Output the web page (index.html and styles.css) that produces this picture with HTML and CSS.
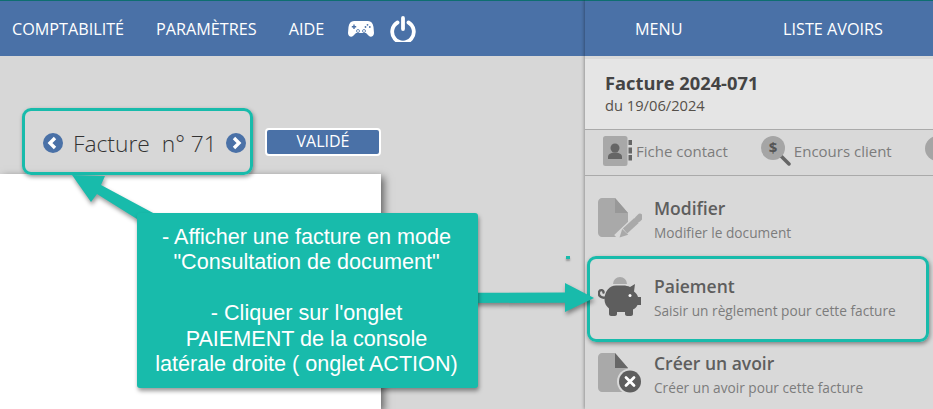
FILE: index.html
```html
<!DOCTYPE html>
<html lang="fr">
<head>
  <meta charset="UTF-8">
  <title>Facture 2024-071</title>
  <link rel="stylesheet" href="styles.css">
</head>
<body>
  <div class="main">
    <nav class="topbar">
      <a class="topbar-link">COMPTABILITÉ</a>
      <a class="topbar-link">PARAMÈTRES</a>
      <a class="topbar-link">AIDE</a>
      <svg class="icon-gamepad" viewBox="0 0 26 16">
        <path fill="#fff" d="M6 0h14c3 0 5 2 5.500 6l.5 6c0 3-3 5-5 3l-3-3H8l-3 3c-2 2-5 0-5-3l.5-6C1 2 3 0 6 0z"/>
        <g fill="none" stroke="#4a71a7" stroke-width=".8">
          <circle cx="10" cy="10" r="1.500"/>
          <circle cx="16" cy="10" r="1.500"/>
        </g>
        <path fill="#4a71a7" d="M5.300 3.500h1.400v1.500h1.500v1.400H6.700v1.500H5.300V6.400H3.800V5h1.500z"/>
        <g fill="#4a71a7">
          <circle cx="19.500" cy="3.800" r=".9"/>
          <circle cx="21.800" cy="6" r=".9"/>
          <circle cx="17.500" cy="6" r=".9"/>
        </g>
      </svg>
      <svg class="icon-power" viewBox="0 0 26 26">
        <path fill="none" stroke="#fff" stroke-width="3.800" stroke-linecap="round" d="M7.500 6.500a10.800 10.800 0 1 0 11 0"/>
        <path fill="none" stroke="#fff" stroke-width="3.800" stroke-linecap="round" d="M13 2v11"/>
      </svg>
    </nav>

    <div class="doc-head">
      <div class="doc-nav">
        <span class="round-btn">
          <svg viewBox="0 0 20 20"><path d="M12 5l-5 5 5 5" /></svg>
        </span>
        <span class="doc-title">Facture&nbsp; n° 71</span>
        <span class="round-btn">
          <svg viewBox="0 0 20 20"><path d="M8 5l5 5-5 5" /></svg>
        </span>
      </div>
      <span class="status">VALIDÉ</span>
    </div>

    <div class="sheet"></div>
  </div>

  <aside class="panel">
    <div class="panel-tabs">
      <a class="panel-tab">MENU</a>
      <a class="panel-tab">LISTE AVOIRS</a>
    </div>

    <div class="panel-info">
      <div class="info-title">Facture 2024-071</div>
      <div class="info-date">du 19/06/2024</div>
    </div>

    <div class="toolbar">
      <div class="tool">
        <svg class="icon-contact" viewBox="0 0 29 30">
          <rect width="24.500" height="30" rx="2.500" fill="#a8a8a8"/>
          <circle cx="12" cy="12" r="4.500" fill="#666"/>
          <path fill="#666" d="M5 23v-2c0-3 3-4.500 7-4.500s7 1.500 7 4.500v2z"/>
          <path fill="#666" d="M25.500 4H29v5h-3.500zM25.500 11.500H29v6h-3.500zM25.500 19H29v5.500h-3.500z"/>
        </svg>
        <span>Fiche contact</span>
      </div>
      <div class="tool">
        <svg class="icon-search" viewBox="0 0 30 30">
          <path stroke="#666" stroke-width="3.500" stroke-linecap="round" d="M20 20l8 8"/>
          <circle cx="12" cy="12" r="12" fill="#a5a5a5"/>
          <text x="12" y="17" class="dollar" text-anchor="middle">$</text>
        </svg>
        <span>Encours client</span>
      </div>
      <span class="tool-round"></span>
    </div>

    <ul class="actions">
      <li class="action">
        <svg class="action-icon" viewBox="0 0 44 40">
          <path fill="#a9a9a9" d="M4 0h13l13 15v20c0 2-2 4-4 4H4c-2 0-4-2-4-4V4c0-2 2-4 4-4z"/>
          <path fill="#989898" d="M17 0l13 15H17z"/>
          <path stroke="#d9d9d9" stroke-width="11" d="M20 41l22-21"/>
          <path stroke="#a9a9a9" stroke-width="6.500" d="M27 33l11.500-10.500"/>
          <path stroke="#a9a9a9" stroke-width="6.500" stroke-linecap="round" d="M40 21l2-2"/>
          <path fill="#a9a9a9" d="M21.500 39.500l2.700-8.500 6 5.800z"/>
        </svg>
        <div>
          <div class="action-name">Modifier</div>
          <div class="action-desc">Modifier le document</div>
        </div>
      </li>
      <li class="action">
        <svg class="action-icon" viewBox="0 0 44 40">
          <path fill="#a9a9a9" d="M15 8a7 7 0 0 1 14 0z"/>
          <path fill="none" stroke="#5e5e5e" stroke-width="2.400" stroke-linecap="round" d="M9 21C4 23 0 20 1 16c1-3 5-2 4.500 .5"/>
          <path fill="#5e5e5e" d="M18 9.500h7c3 0 5 .5 7 1.500l5-3-1 7.500c2 1.500 3.500 3.500 4 5.500h3v8h-3.500c-1 2-2.500 3.500-4.500 4.500V38c0 1-1 2-2 2h-4c-1 0-2-1-2-2v-2H19v2c0 1-1 2-2 2h-4c-1 0-2-1-2-2v-5.500C8 30 6.500 27 6.500 23.500c0-8 5-14 11.500-14z"/>
          <circle cx="32" cy="19.500" r="1.500" fill="#fff"/>
        </svg>
        <div>
          <div class="action-name">Paiement</div>
          <div class="action-desc">Saisir un règlement pour cette facture</div>
        </div>
      </li>
      <li class="action">
        <svg class="action-icon" viewBox="0 0 44 40">
          <path fill="#a9a9a9" d="M4 0h13l13 15v20c0 2-2 4-4 4H4c-2 0-4-2-4-4V4c0-2 2-4 4-4z"/>
          <path fill="#666" d="M17 0l13 15H17z"/>
          <circle cx="32" cy="28.500" r="13" fill="#d9d9d9"/>
          <circle cx="32" cy="28.500" r="11" fill="#5e5e5e"/>
          <path stroke="#fff" stroke-width="2.800" stroke-linecap="round" d="M28 24.500l8 8M36 24.500l-8 8"/>
        </svg>
        <div>
          <div class="action-name">Créer un avoir</div>
          <div class="action-desc">Créer un avoir pour cette facture</div>
        </div>
      </li>
    </ul>
  </aside>

  <!-- annotations over the screen -->
  <div class="mark mark-nav"></div>
  <div class="mark mark-pay"></div>
  <span class="speck"></span>

  <svg class="arrows" viewBox="0 0 933 409">
    <path d="M72 175L105 176 101 185 155 214 137 219 97 194 91 202z"/>
    <path d="M470 292.800L565 292.500V283L594 298 565 312V302.700L470 303z"/>
  </svg>

  <div class="callout">
    - Afficher une facture en mode<br>
    "Consultation de document"<br>
    <br>
    - Cliquer sur l'onglet<br>
    PAIEMENT de la console<br>
    latérale droite ( onglet ACTION)
  </div>
</body>
</html>
```

FILE: styles.css
```css
* {
  box-sizing: border-box;
}

body {
  margin: 0;
  width: 933px;
  height: 409px;
  display: flex;
  overflow: hidden;
  position: relative;
  background-color: #d7d7d7;
  font-family: 'Open Sans', sans-serif;
  color: #444;
}

/* left side */
.main {
  width: 585px;
  display: flex;
  flex-direction: column;
}

.topbar {
  height: 56px;
  display: flex;
  align-items: center;
  padding: 0 0 0 12px;
  background-color: #4a71a7;
  border-top: 1px solid #0e6e70;
}

.topbar-link {
  font-size: 16.200px;
  color: #fff;
  margin-right: 32px;
}

.topbar-link:nth-child(3) {
  margin-right: 24px;
}

.icon-gamepad {
  width: 26px;
  height: 16px;
  margin-right: 16px;
}

.icon-power {
  width: 26px;
  height: 26px;
}

.doc-head {
  height: 118px;
  display: flex;
  align-items: center;
  padding: 56px 0 0 43px;
}

.doc-nav {
  width: 203px;
  display: flex;
  align-items: center;
  gap: 10px;
}

.round-btn {
  width: 20px;
  height: 20px;
  flex: none;
  border-radius: 50%;
  background-color: #4a71a7;
}

.round-btn svg {
  display: block;
  fill: none;
  stroke: #fff;
  stroke-width: 3.4;
}

.doc-title {
  width: 143px;
  font-size: 22.800px;
  font-weight: 300;
  color: #333;
  white-space: nowrap;
}

.status {
  width: 116px;
  height: 28px;
  margin: -3px 0 0 19px;
  border: 2px solid #fff;
  border-radius: 4px;
  background-color: #4a71a7;
  color: #fff;
  font-size: 16px;
  line-height: 23px;
  text-align: center;
}

.sheet {
  width: 381px;
  flex: 1;
  background-color: #fff;
  box-shadow: 3px 3px 8px rgba(0, 0, 0, 0.55);
}

/* right console */
.panel {
  width: 348px;
  display: flex;
  flex-direction: column;
  position: relative;
  background-color: #d9d9d9;
  box-shadow: -1px 0 3px rgba(0, 0, 0, 0.3);
  overflow: hidden;
}

.panel-tabs {
  height: 56px;
  flex: none;
  display: flex;
  align-items: center;
  gap: 100.500px;
  padding-left: 50px;
  background-color: #4a71a7;
  border-top: 1px solid #0e6e70;
}

.panel-tab {
  font-size: 16.200px;
  color: #fff;
}

.panel-info {
  height: 71px;
  flex: none;
  padding: 12px 0 0 20px;
  margin-top: 3px;
  background-color: #e5e5e5;
  border-bottom: 1px solid #aaa;
}

.info-title {
  font-size: 18.300px;
  font-weight: 700;
  line-height: 23px;
  color: #444;
}

.info-date {
  font-size: 14.700px;
  line-height: 22px;
  color: #55504a;
}

.toolbar {
  height: 46px;
  flex: none;
  display: flex;
  align-items: flex-start;
  gap: 33px;
  padding: 6px 0 0 18px;
  border-bottom: 1px solid #aaa;
}

.tool {
  display: flex;
  align-items: center;
  gap: 7px;
  flex: none;
  font-size: 15px;
  line-height: 30px;
  color: #7c7c7c;
  white-space: nowrap;
}

.tool:nth-child(2) {
  gap: 3px;
}

.icon-contact {
  width: 29px;
  height: 30px;
  margin-right: -3px;
}

.icon-search {
  width: 30px;
  height: 30px;
}

.dollar {
  font-size: 15px;
  font-weight: 700;
  fill: #555;
}

.tool-round {
  width: 25px;
  height: 25px;
  flex: none;
  border-radius: 50%;
  background-color: #a5a5a5;
}

.actions {
  list-style: none;
  margin: 0;
  padding: 20px 0 0 13px;
}

.action {
  height: 77.500px;
  display: flex;
  gap: 12px;
}

.action-icon {
  width: 44px;
  height: 40px;
  flex: none;
  margin-top: 2px;
}

.action-name {
  font-size: 17.500px;
  font-weight: 600;
  line-height: 24px;
  color: #5e5e5e;
}

.action-desc {
  font-size: 13.700px;
  line-height: 24px;
  margin-top: 1px;
  color: #7c7c7c;
  white-space: nowrap;
}

/* annotations */
.mark {
  position: absolute;
  border: 3px solid #18bbab;
  border-radius: 9px;
  box-shadow: 1px 2px 4px rgba(0, 0, 0, 0.4);
}

.mark-nav {
  left: 22px;
  top: 108px;
  width: 231px;
  height: 67px;
}

.mark-pay {
  left: 587px;
  top: 256px;
  width: 342px;
  height: 86px;
}

.speck {
  position: absolute;
  left: 566px;
  top: 256px;
  width: 4px;
  height: 3px;
  background-color: #18bbab;
  box-shadow: 0 2px 2px rgba(0, 0, 0, 0.3);
}

.arrows {
  position: absolute;
  left: 0;
  top: 0;
  width: 933px;
  height: 409px;
  fill: #18bbab;
  filter: drop-shadow(1px 3px 2px rgba(0, 0, 0, 0.4));
}

.callout {
  position: absolute;
  left: 137px;
  top: 213px;
  width: 341px;
  height: 175px;
  padding: 11px 2px 0 0;
  border-radius: 3px;
  background-color: #18bbab;
  box-shadow: 1px 3px 4px rgba(0, 0, 0, 0.4);
  color: #fff;
  font-family: 'Liberation Sans', sans-serif;
  font-size: 21.600px;
  line-height: 25.400px;
  text-align: center;
}
```
